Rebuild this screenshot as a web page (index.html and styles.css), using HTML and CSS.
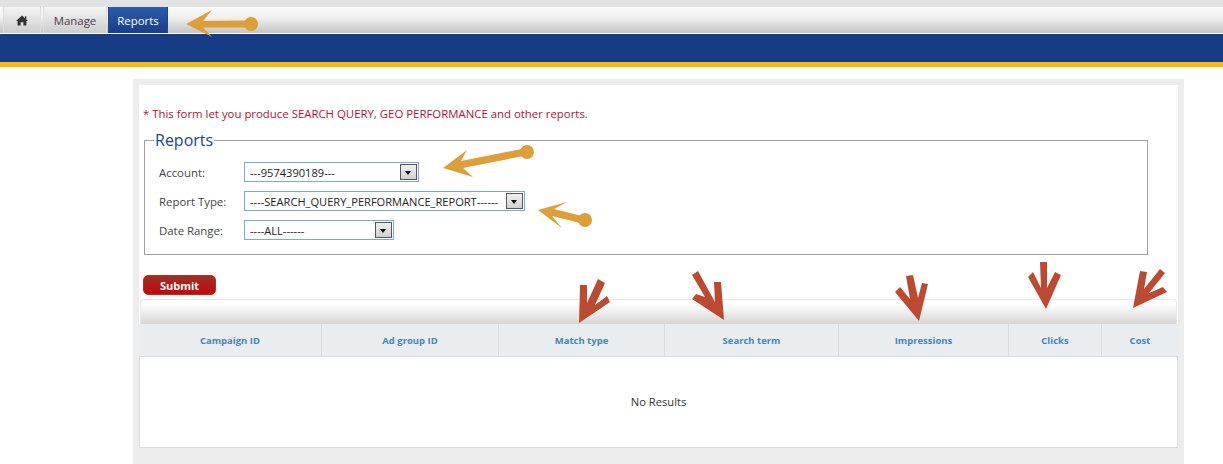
FILE: index.html
```html
<!DOCTYPE html>
<html lang="en">
<head>
<meta charset="utf-8">
<title>Reports</title>
<link rel="stylesheet" href="styles.css">
</head>
<body>
<header class="header">
  <div class="topstrip"></div>
  <nav class="nav">
    <a class="tab tab-home" aria-label="Home">
      <svg width="12" height="11" viewBox="0 0 12 11"><path d="M6 0.5 L9 3.2 V1.2 H10.3 V4.4 L12 6 H10.4 V10.5 H7.4 V7.2 H4.6 V10.5 H1.6 V6 H0 Z" fill="#333"/></svg>
    </a>
    <a class="tab tab-manage">Manage</a>
    <a class="tab tab-active">Reports</a>
  </nav>
  <div class="blueband"></div>
</header>
<main class="panel">
  <div class="inner">
    <p class="note">* This form let you produce SEARCH QUERY, GEO PERFORMANCE and other reports.</p>
    <fieldset class="box">
      <legend class="box-title">Reports</legend>
      <div class="row">
        <label class="label">Account:</label>
        <div class="select select-account"><span class="select-text">---9574390189---</span><span class="select-btn"></span></div>
      </div>
      <div class="row">
        <label class="label">Report Type:</label>
        <div class="select select-type"><span class="select-text">----SEARCH_QUERY_PERFORMANCE_REPORT------</span><span class="select-btn"></span></div>
      </div>
      <div class="row">
        <label class="label">Date Range:</label>
        <div class="select select-date"><span class="select-text">----ALL------</span><span class="select-btn"></span></div>
      </div>
    </fieldset>
    <button class="submit" type="button">Submit</button>
    <section class="results">
      <div class="results-bar"></div>
      <div class="thead">
        <div class="th">Campaign ID</div>
        <div class="th">Ad group ID</div>
        <div class="th">Match type</div>
        <div class="th">Search term</div>
        <div class="th">Impressions</div>
        <div class="th">Clicks</div>
        <div class="th">Cost</div>
      </div>
      <div class="tbody">No Results</div>
    </section>
  </div>
</main>
<svg class="overlay" width="1223" height="464" viewBox="0 0 1223 464" aria-hidden="true">
  <g class="gold">
    <polygon points="186,24 212,10 203,21 247,20.5 247,27.5 203,27.5 212,37"/>
    <circle cx="251" cy="24" r="7"/>
    <polygon points="443,168 467,150 461,161 524,148.5 526,155.5 463,168 473,177"/>
    <circle cx="527" cy="152" r="7"/>
    <polygon points="538,210 567,202 554,209 582,216 580,223 552,216 562,228"/>
    <circle cx="585" cy="220" r="7"/>
  </g>
  <g class="red">
    <polygon points="579,323 580,285 587,285 587,303 598,279 605,283 595,305 607,296 610,302"/>
    <polygon points="724,320 692,299 696,294 705,297 692,275 698,271 715,302 714,282 721,282"/>
    <polygon points="919,321 895,292 900,287 910,299 906,276 913,275 918,298 922,283 928,284"/>
    <polygon points="1046,309 1028,277 1033,272 1041,288 1040,262 1047,262 1047,288 1055,272 1061,275"/>
    <polygon points="1133,308 1140,271 1147,272 1144,289 1160,269 1165,273 1149,293 1163,287 1167,292"/>
  </g>
</svg>
</body>
</html>
```
FILE: styles.css
```css
* { box-sizing: border-box; }
html, body { margin: 0; padding: 0; }
body {
  position: relative;
  height: 464px;
  overflow: hidden;
  background: #fff;
  font-family: "Open Sans", "Noto Sans", sans-serif;
  font-size: 11px;
  color: #333;
}
.topstrip { height: 7px; background: #e2e2e2; }
.nav {
  display: flex;
  height: 27px;
  padding-left: 3px;
  background: linear-gradient(#fafafa, #f0f0f0 40%, #c4c4c4);
  border-bottom: 1px solid #fff;
}
.tab {
  display: flex;
  align-items: center;
  justify-content: center;
  height: 26px;
  margin-right: 1px;
  background: linear-gradient(#f4f4f4, #cdcdcd);
  border-left: 1px solid #ddd;
  border-right: 1px solid #ddd;
  color: #4a3b4a;
  font-size: 11.4px;
}
.tab-home { width: 38px; margin-right: 2px; }
.tab-manage { width: 64px; }
.tab-active {
  width: 60px;
  background: linear-gradient(#2c5cae, #1a3d88);
  border-color: #1f468f;
  color: #fff;
}
.blueband {
  height: 33px;
  background: #173b85;
  border-bottom: 5px solid #fbb900;
}
.panel {
  width: 1051px;
  height: 385px;
  margin: 12px 0 0 133px;
  padding: 6px 6px 0;
  background: #ededed;
}
.inner {
  height: 363px;
  background: #fff;
}
.note {
  margin: 0;
  padding: 20px 0 0 4px;
  height: 45px;
  color: #b80f35;
  font-size: 11.4px;
  line-height: 18px;
}
.box {
  width: 1004px;
  height: 125px;
  margin: 0 0 0 5px;
  padding: 0 0 0 14px;
  border: 1px solid #a0a0a0;
  display: flex;
  flex-direction: column;
}
.box-title {
  margin-left: -5px;
  padding: 0 1px 0 1px;
  color: #1a4390;
  font-size: 16px;
  line-height: 20px;
}
.row { display: flex; align-items: center; height: 20px; margin-bottom: 9px; }
.row:first-of-type { margin-top: 12px; }
.label { width: 85px; font-size: 11.4px; color: #444; }
.select {
  display: flex;
  align-items: center;
  height: 20px;
  padding: 0 1px 0 5px;
  border: 1px solid #7aa9d4;
  background: #fff;
  font-family: "Open Sans", sans-serif;
  font-size: 11.1px;
  color: #222;
}
.select-text { flex: 1; white-space: nowrap; }
.select-btn {
  position: relative;
  width: 17px;
  height: 16px;
  flex: none;
  background: linear-gradient(#f0f0f0, #d0d0d0);
  border: 1px solid #555;
}
.select-btn::after {
  content: "";
  position: absolute;
  left: 4px;
  top: 6px;
  border: 3.5px solid transparent;
  border-top: 4px solid #111;
  border-bottom: 0;
}
.select-account { width: 175px; }
.select-type { width: 281px; }
.select-date { width: 150px; }
.submit {
  display: block;
  width: 73px;
  height: 20px;
  margin: 20px 0 4px 4px;
  padding: 0;
  border: 1px solid #b5302a;
  border-radius: 5px;
  background: linear-gradient(#9c3029, #c90505);
  color: #fff;
  font-family: "Open Sans", sans-serif;
  font-size: 11px;
  font-weight: 700;
}
.results { width: 1039px; }
.results-bar {
  height: 25px;
  margin: 0 0 0 1px;
  width: 1037px;
  border: 1px solid #e8e8e8;
  border-bottom: 0;
  border-radius: 4px 4px 0 0;
  background: linear-gradient(#fff 15%, #d6d6d6);
}
.thead {
  display: grid;
  grid-template-columns: 183px 177px 166px 174px 170px 93px 76px;
  height: 33px;
  background: #e9edf0;
  border-bottom: 1px solid #d8dcdf;
}
.th {
  display: flex;
  align-items: center;
  justify-content: center;
  border-right: 1px solid #d8dcdf;
  color: #4b84ad;
  font-size: 9.5px;
  font-weight: 700;
}
.th:last-child { border-right: 0; }
.tbody {
  display: flex;
  align-items: center;
  justify-content: center;
  height: 91px;
  padding-bottom: 2px;
  border: 1px solid #dcdcdc;
  border-top: 0;
  color: #333;
  font-size: 11.2px;
}
.overlay { position: absolute; left: 0; top: 0; pointer-events: none; }
.gold { fill: #dd9f36; }
.red { fill: #bc4a30; }
```
